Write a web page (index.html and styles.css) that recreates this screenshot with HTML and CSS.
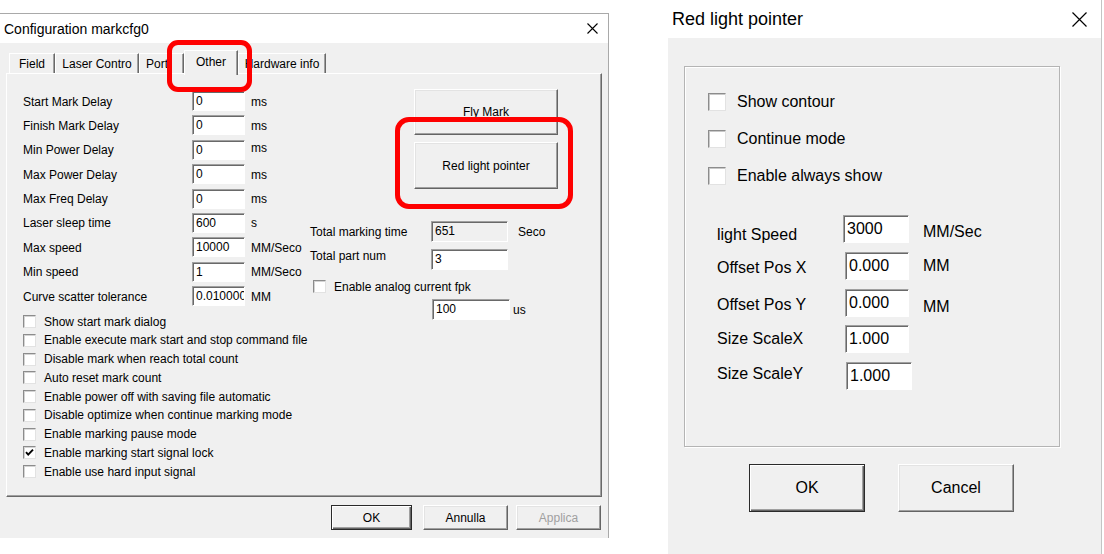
FILE: index.html
```html
<!DOCTYPE html>
<html lang="en">
<head>
<meta charset="utf-8">
<title>Configuration markcfg0</title>
<link rel="stylesheet" href="styles.css">
</head>
<body>
<div class="desk">
  <section class="dlg dlg-config">
    <header class="titlebar">
      <span class="title">Configuration markcfg0</span>
      <svg class="close close-sm" viewBox="0 0 11 11" width="11" height="11"><path d="M0.5 0.5L10.5 10.5M10.5 0.5L0.5 10.5" stroke="#000" stroke-width="1.1" fill="none"/></svg>
    </header>
    <div class="client">
      <div class="tabs">
        <div class="tab t-field">Field</div>
        <div class="tab t-laser">Laser Contro</div>
        <div class="tab t-port">Port</div>
        <div class="tab t-other active">Other</div>
        <div class="tab t-hw">Hardware info</div>
      </div>
      <div class="panel">
        <div class="form">
          <span class="lbl">Start Mark Delay</span><span class="edit">0</span><span class="unit">ms</span>
          <span class="lbl">Finish Mark Delay</span><span class="edit">0</span><span class="unit">ms</span>
          <span class="lbl">Min Power Delay</span><span class="edit">0</span><span class="unit unit-up">ms</span>
          <span class="lbl">Max Power Delay</span><span class="edit">0</span><span class="unit">ms</span>
          <span class="lbl">Max Freq Delay</span><span class="edit">0</span><span class="unit">ms</span>
          <span class="lbl">Laser sleep time</span><span class="edit">600</span><span class="unit">s</span>
          <span class="lbl">Max speed</span><span class="edit">10000</span><span class="unit">MM/Seco</span>
          <span class="lbl">Min speed</span><span class="edit">1</span><span class="unit">MM/Seco</span>
          <span class="lbl">Curve scatter tolerance</span><span class="edit">0.010000</span><span class="unit">MM</span>
        </div>
        <div class="side">
          <div class="btn big">Fly Mark</div>
          <div class="btn big">Red light pointer</div>
          <div class="trow t1"><span class="tlbl">Total marking time</span><span class="edit tedit ro">651</span><span class="tunit">Seco</span></div>
          <div class="trow t2"><span class="tlbl tlbl-up">Total part num</span><span class="edit tedit">3</span></div>
          <div class="trow t3"><span class="cbox"></span><span>Enable analog current fpk</span></div>
          <div class="trow t4"><span class="edit tedit2">100</span><span class="tunit2">us</span></div>
        </div>
        <div class="checks">
          <div class="chk"><span class="cbox"></span><span>Show start mark dialog</span></div>
          <div class="chk"><span class="cbox"></span><span>Enable execute mark start and stop command file</span></div>
          <div class="chk"><span class="cbox"></span><span>Disable mark when reach total count</span></div>
          <div class="chk"><span class="cbox"></span><span>Auto reset mark count</span></div>
          <div class="chk"><span class="cbox"></span><span>Enable power off with saving file automatic</span></div>
          <div class="chk"><span class="cbox"></span><span>Disable optimize when continue marking mode</span></div>
          <div class="chk"><span class="cbox"></span><span>Enable marking pause mode</span></div>
          <div class="chk"><span class="cbox"><svg viewBox="0 0 11 11" width="11" height="11"><path d="M2 5.2L4.2 7.6L9 2.6" stroke="#000" stroke-width="1.9" fill="none"/></svg></span><span>Enable marking start signal lock</span></div>
          <div class="chk"><span class="cbox"></span><span>Enable use hard input signal</span></div>
        </div>
      </div>
      <div class="footer">
        <div class="btn fbtn fb-ok default">OK</div>
        <div class="btn fbtn fb-cancel">Annulla</div>
        <div class="btn fbtn fb-apply disabled">Applica</div>
      </div>
    </div>
    <div class="callout callout-tab"></div>
    <div class="callout callout-btn"></div>
  </section>

  <section class="dlg dlg-red">
    <header class="titlebar titlebar-red">
      <span class="title title-red">Red light pointer</span>
      <svg class="close close-lg" viewBox="0 0 15 15" width="15" height="15"><path d="M0.5 0.5L14.5 14.5M14.5 0.5L0.5 14.5" stroke="#000" stroke-width="1.2" fill="none"/></svg>
    </header>
    <div class="client client-red">
      <div class="group">
        <div class="rchecks">
          <div class="rchk"><span class="rbox"></span><span>Show contour</span></div>
          <div class="rchk"><span class="rbox"></span><span>Continue mode</span></div>
          <div class="rchk"><span class="rbox"></span><span>Enable always show</span></div>
        </div>
        <div class="rform">
          <span class="rlbl rlbl-first">light Speed</span><span class="redit">3000</span><span class="runit runit-first">MM/Sec</span>
          <span class="rlbl rlbl-down">Offset Pos X</span><span class="redit redit-b">0.000</span><span class="runit">MM</span>
          <span class="rlbl rlbl-down">Offset Pos Y</span><span class="redit redit-b">0.000</span><span class="runit runit-down">MM</span>
          <span class="rlbl">Size ScaleX</span><span class="redit redit-b">1.000</span><span class="runit"></span>
          <span class="rlbl rlbl-last">Size ScaleY</span><span class="redit redit-c">1.000</span><span class="runit"></span>
        </div>
      </div>
      <div class="rfooter">
        <div class="btn rbtn default">OK</div>
        <div class="btn rbtn">Cancel</div>
      </div>
    </div>
  </section>
</div>
</body>
</html>
```

FILE: styles.css
```css
* { box-sizing: border-box; }
html, body { margin: 0; padding: 0; }
body {
  width: 1104px;
  height: 554px;
  overflow: hidden;
  background: #fff;
  font-family: "Liberation Sans", Arial, sans-serif;
  color: #000;
}
.desk { display: flex; align-items: flex-start; height: 554px; }

/* ---------- shared ---------- */
.titlebar {
  background: #fff;
  display: flex;
  align-items: center;
  justify-content: space-between;
}
.close { display: block; }
.btn {
  display: flex;
  align-items: center;
  justify-content: center;
  background: #f0f0f0;
  border: 1px solid;
  border-color: #fff #646464 #646464 #fff;
  box-shadow: inset -1px -1px 0 #a0a0a0, inset 1px 1px 0 #e3e3e3;
  white-space: nowrap;
}
.btn.default {
  border-color: #2a2a2a;
  box-shadow: inset 1px 1px 0 #fff, inset -1px -1px 0 #646464, inset -2px -2px 0 #a0a0a0;
}
.edit {
  display: block;
  background: #fff;
  border: 1px solid;
  border-color: #a0a0a0 #fff #fff #a0a0a0;
  box-shadow: inset 1px 1px 0 #696969;
  padding-left: 3px;
  white-space: nowrap;
  overflow: hidden;
}
.cbox {
  width: 13px;
  height: 13px;
  flex: none;
  background: #fff;
  border: 1px solid;
  border-color: #8c8c8c #e2e2e2 #e2e2e2 #8c8c8c;
  box-shadow: inset 1px 1px 0 #d4d4d4;
  display: flex;
  align-items: center;
  justify-content: center;
}
.cbox svg { display: block; }

/* ---------- configuration dialog ---------- */
.dlg-config {
  position: relative;
  margin-top: 13px;
  width: 609px;
  height: 525px;
  border-top: 1px solid #a9a9a9;
  border-right: 1px solid #a9a9a9;
  display: flex;
  flex-direction: column;
  font-size: 12px;
}
.dlg-config .titlebar { height: 29px; padding: 0 10px 0 4px; }
.title { font-size: 14px; }
.client { flex: 1; background: #f0f0f0; padding-top: 7px; }

.tabs {
  display: flex;
  align-items: flex-end;
  height: 23px;
  padding-left: 9px;
  position: relative;
  z-index: 1;
}
.tab {
  height: 20px;
  display: flex;
  align-items: center;
  justify-content: center;
  background: #f0f0f0;
  border-top: 1px solid #fff;
  border-left: 1px solid #fff;
  border-right: 1px solid #696969;
  box-shadow: inset -1px 0 0 #a0a0a0;
  white-space: nowrap;
  overflow: hidden;
}
.t-field { width: 46px; }
.t-laser { width: 84px; }
.t-port { width: 45px; justify-content: flex-start; padding-left: 6px; }
.t-other { width: 54px; }
.t-hw { width: 88px; }
.tab.active { height: 25px; margin-bottom: -2px; padding-bottom: 2px; }

.panel {
  margin-left: 6px;
  width: 596px;
  height: 424px;
  border: 1px solid;
  border-color: #fff #696969 #696969 #fff;
  box-shadow: inset -1px -1px 0 #a0a0a0;
  padding: 17px 0 0 16px;
  display: grid;
  grid-template-columns: 287px 1fr;
  grid-template-rows: auto 1fr;
  align-items: start;
}
.form {
  grid-column: 1;
  grid-row: 1;
  display: grid;
  grid-template-columns: 169px 53px 59px;
  grid-auto-rows: 20px;
  row-gap: 4.4px;
  align-items: center;
}
.form .lbl { padding-top: 1px; }
.form .edit { height: 20px; line-height: 18px; }
.unit { padding-left: 6px; white-space: nowrap; overflow: hidden; padding-top: 1px; }
.unit-up { align-self: start; line-height: 16px; padding-top: 0; }

.side {
  grid-column: 2;
  grid-row: 1 / span 2;
  margin-top: -2px;
  display: flex;
  flex-direction: column;
}
.btn.big { margin-left: 104px; width: 144px; height: 46px; }
.btn.big + .btn.big { margin-top: 7px; height: 47px; }
.trow { display: flex; align-items: center; }
.t1 { margin-top: 32px; height: 21px; }
.t2 { margin-top: 7px; height: 21px; }
.t3 { margin-top: 10px; height: 13px; margin-left: 3px; gap: 8px; }
.t4 { margin-top: 6px; height: 21px; margin-left: 122px; }
.tlbl { width: 121px; }
.tlbl-up { align-self: flex-start; line-height: 14px; }
.tedit { width: 77px; height: 21px; line-height: 19px; }
.tedit.ro { background: #f0f0f0; }
.tunit { margin-left: 10px; }
.tedit2 { width: 78px; height: 21px; line-height: 19px; }
.tunit2 { margin-left: 3px; }

.checks {
  grid-column: 1;
  grid-row: 2;
  margin-top: 6px;
  display: flex;
  flex-direction: column;
}
.chk { height: 18.75px; display: flex; align-items: center; gap: 8px; white-space: nowrap; }

.footer {
  display: flex;
  justify-content: flex-end;
  padding-right: 7px;
  margin-top: 8px;
}
.fbtn { height: 25px; }
.fb-ok { width: 81px; }
.fb-cancel { width: 85px; margin-left: 11px; }
.fb-apply { width: 85px; margin-left: 8px; }
.btn.disabled { color: #a0a0a0; }

.callout {
  position: absolute;
  border: 5px solid #fe0000;
  pointer-events: none;
  z-index: 5;
}
.callout-tab { left: 167px; top: 26px; width: 85px; height: 52px; border-radius: 11px; }
.callout-btn { left: 395px; top: 103px; width: 178px; height: 92px; border-radius: 14px; }

/* ---------- red light pointer dialog ---------- */
.dlg-red {
  margin-left: 59px;
  width: 434px;
  height: 554px;
  border-right: 1px solid #c4c4c4;
  display: flex;
  flex-direction: column;
  font-size: 16px;
}
.titlebar-red { height: 38px; padding: 0 14px 0 4px; }
.title-red { font-size: 18px; }
.client-red { flex: 1; background: #f0f0f0; padding: 28px 0 0 16px; }
.group {
  width: 376px;
  height: 381px;
  border: 1px solid #b4b4b4;
  box-shadow: inset 1px 1px 0 #fff, 1px 1px 0 #fff;
  padding: 23px 0 0 23px;
}
.rchecks { display: flex; flex-direction: column; gap: 13px; }
.rchk { height: 24px; display: flex; align-items: center; gap: 11px; }
.rbox {
  width: 18px;
  height: 18px;
  background: #fff;
  border: 1px solid;
  border-color: #8c8c8c #e2e2e2 #e2e2e2 #8c8c8c;
  box-shadow: inset 1px 1px 0 #c8c8c8;
}
.rform {
  margin: 27px 0 0 9px;
  display: grid;
  grid-template-columns: 126px 69px 79px;
  grid-auto-rows: 28px;
  row-gap: 8.75px;
  align-items: center;
}
.rlbl { white-space: nowrap; }
.rlbl-first { padding-top: 12px; }
.rlbl-down { padding-top: 4px; }
.rlbl-last { padding-bottom: 4px; }
.redit {
  width: 66px;
  height: 28px;
  line-height: 26px;
  background: #fff;
  border: 1px solid;
  border-color: #a0a0a0 #fff #fff #a0a0a0;
  box-shadow: inset 1px 1px 0 #696969;
  padding-left: 3px;
  white-space: nowrap;
  overflow: hidden;
}
.redit-b { margin-left: 2px; width: 64px; }
.redit-c { margin-left: 3px; }
.runit { padding-left: 11px; white-space: nowrap; width: 79px; }
.runit-first { padding-top: 6px; }
.runit-down { padding-top: 8px; }

.rfooter { display: flex; gap: 33px; margin: 17px 0 0 65px; }
.rbtn { width: 116px; height: 48px; }
```
